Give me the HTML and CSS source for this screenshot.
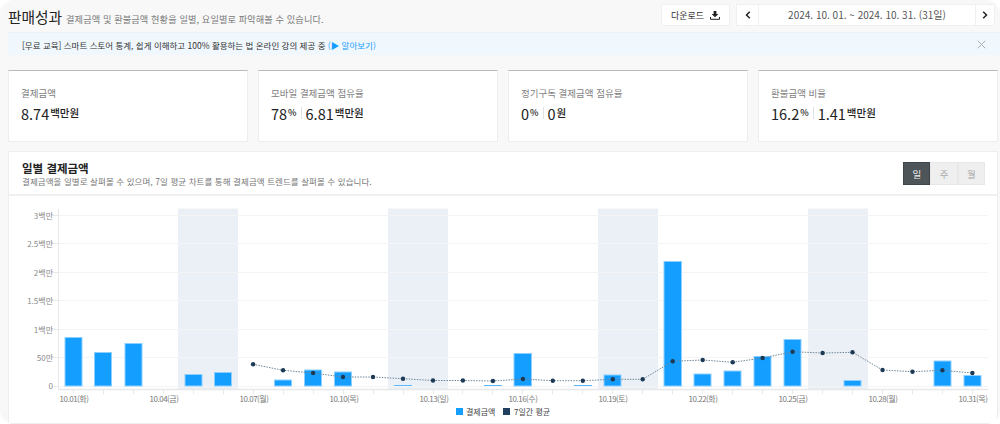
FILE: index.html
```html
<!DOCTYPE html>
<html lang="ko">
<head>
<meta charset="utf-8">
<title>판매성과</title>
<link rel="stylesheet" href="styles.css">
</head>
<body>
<main class="frame">
  <header class="top">
    <div class="heading">
      <h1 class="title">판매성과</h1>
      <p class="subtitle">결제금액 및 환불금액 현황을 일별, 요일별로 파악해볼 수 있습니다.</p>
    </div>
    <div class="actions">
      <button class="btn download">다운로드
        <svg class="dl-icon" viewBox="0 0 10 9" width="10" height="9"><path d="M3.6 0h2.8v3h2L5 6.2 1.6 3h2z" fill="#222"/><path d="M.5 6v2.3h9V6" fill="none" stroke="#222" stroke-width="1"/></svg>
      </button>
      <div class="datenav">
        <button class="btn nav prev"><svg viewBox="0 0 6 8" width="6" height="8"><path d="M4.8 .8 1.5 4l3.3 3.2" fill="none" stroke="#222" stroke-width="1.5"/></svg></button>
        <span class="daterange">2024. 10. 01. ~ 2024. 10. 31. (31일)</span>
        <button class="btn nav next"><svg viewBox="0 0 6 8" width="6" height="8"><path d="M1.2 .8 4.5 4 1.2 7.2" fill="none" stroke="#222" stroke-width="1.5"/></svg></button>
      </div>
    </div>
  </header>

  <aside class="banner">
    <p class="banner-text">[무료 교육] 스마트 스토어 통계, 쉽게 이해하고 100% 활용하는 법 온라인 강의 제공 중 <a class="banner-link">(▶ 알아보기)</a></p>
    <svg class="close" viewBox="0 0 9 9" width="9" height="9"><path d="M.7.7l7.6 7.6M8.3.7 .7 8.3" stroke="#a9b0b5" stroke-width="1" fill="none"/></svg>
  </aside>

  <section class="stats">
    <article class="stat">
      <h2 class="stat-label">결제금액</h2>
      <div class="stat-value"><span class="num">8.74</span><span class="unit">백만원</span></div>
    </article>
    <article class="stat">
      <h2 class="stat-label">모바일 결제금액 점유율</h2>
      <div class="stat-value"><span class="num">78</span><span class="pct">%</span><i class="sep"></i><span class="num">6.81</span><span class="unit">백만원</span></div>
    </article>
    <article class="stat">
      <h2 class="stat-label">정기구독 결제금액 점유율</h2>
      <div class="stat-value"><span class="num">0</span><span class="pct">%</span><i class="sep"></i><span class="num">0</span><span class="unit">원</span></div>
    </article>
    <article class="stat">
      <h2 class="stat-label">환불금액 비율</h2>
      <div class="stat-value"><span class="num">16.2</span><span class="pct">%</span><i class="sep"></i><span class="num">1.41</span><span class="unit">백만원</span></div>
    </article>
  </section>

  <section class="panel">
    <header class="panel-head">
      <div>
        <h2 class="panel-title">일별 결제금액</h2>
        <p class="panel-sub">결제금액을 일별로 살펴볼 수 있으며, 7일 평균 차트를 통해 결제금액 트렌드를 살펴볼 수 있습니다.</p>
      </div>
      <div class="toggle">
        <button class="tg on">일</button><button class="tg">주</button><button class="tg">월</button>
      </div>
    </header>
    <svg class="chart" viewBox="9 196 989 228" width="989" height="228">
      <g class="bands">
        <rect x="178" y="208.5" width="60" height="181"/>
        <rect x="388" y="208.5" width="60" height="181"/>
        <rect x="598" y="208.5" width="60" height="181"/>
        <rect x="808" y="208.5" width="60" height="181"/>
      </g>
      <g class="grid">
        <path d="M58 215.5H988M58 243.5H988M58 272.5H988M58 300.5H988M58 329.5H988M58 357.5H988M58 386.5H988"/>
      </g>
      <g class="axis">
        <path d="M58.5 209V390M52 215.5H58M52 243.5H58M52 272.5H58M52 300.5H58M52 329.5H58M52 357.5H58M52 386.5H58"/>
        <path class="xline" d="M58 389.5H988"/>
        <path d="M73.5 390v4M103.5 390v4M133.5 390v4M163.5 390v4M193.5 390v4M223.5 390v4M253.5 390v4M283.5 390v4M313.5 390v4M343.5 390v4M373.5 390v4M403.5 390v4M433.5 390v4M462.5 390v4M492.5 390v4M522.5 390v4M552.5 390v4M582.5 390v4M612.5 390v4M642.5 390v4M672.5 390v4M702.5 390v4M732.5 390v4M762.5 390v4M792.5 390v4M822.5 390v4M852.5 390v4M882.5 390v4M912.5 390v4M942.5 390v4M972.5 390v4"/>
      </g>
      <g class="ylabels">
        <text x="53" y="218.5">3백만</text>
        <text x="53" y="246.5">2.5백만</text>
        <text x="53" y="275.5">2백만</text>
        <text x="53" y="303.5">1.5백만</text>
        <text x="53" y="332.5">1백만</text>
        <text x="53" y="360.5">50만</text>
        <text x="53" y="389">0</text>
      </g>
      <g class="xlabels">
        <text x="74" y="401.5">10.01(화)</text>
        <text x="164" y="401.5">10.04(금)</text>
        <text x="254" y="401.5">10.07(월)</text>
        <text x="344" y="401.5">10.10(목)</text>
        <text x="434" y="401.5">10.13(일)</text>
        <text x="523" y="401.5">10.16(수)</text>
        <text x="613" y="401.5">10.19(토)</text>
        <text x="703" y="401.5">10.22(화)</text>
        <text x="793" y="401.5">10.25(금)</text>
        <text x="883" y="401.5">10.28(월)</text>
        <text x="973" y="401.5">10.31(목)</text>
      </g>
      <g class="bars">
        <rect x="65" y="337.5" width="17" height="48.5"/>
        <rect x="94.5" y="352.5" width="17" height="33.5"/>
        <rect x="125" y="343.5" width="17" height="42.5"/>
        <rect x="185" y="374.5" width="17" height="11.5"/>
        <rect x="214.5" y="372.5" width="17" height="13.5"/>
        <rect x="274.5" y="380" width="17" height="6"/>
        <rect x="304.5" y="370" width="17" height="16"/>
        <rect x="334.5" y="372" width="17" height="14"/>
        <rect class="thin" x="394" y="385" width="18" height="1"/>
        <rect class="thin" x="484" y="385" width="18" height="1"/>
        <rect x="514" y="353.5" width="17.5" height="32.5"/>
        <rect class="thin" x="574" y="385" width="18" height="1"/>
        <rect x="604" y="375" width="17" height="11"/>
        <rect x="664" y="261.5" width="17.5" height="124.5"/>
        <rect x="694" y="374" width="17" height="12"/>
        <rect x="724" y="371" width="17" height="15"/>
        <rect x="754" y="356.5" width="17" height="29.5"/>
        <rect x="784" y="339.5" width="17" height="46.5"/>
        <rect x="844" y="380.5" width="17" height="5.5"/>
        <rect x="934" y="361" width="17" height="25"/>
        <rect x="964" y="375.5" width="17" height="10.5"/>
      </g>
      <polyline class="avg" points="253.1,364.3 283.1,370.3 313.1,373 343,377 373,377 403,378.7 433,380.5 462.9,380.5 492.9,381 522.9,379 552.8,380.7 582.8,380.7 612.8,379.3 642.7,379.3 672.7,361.3 702.7,360 732.7,362.3 762.6,358 792.6,351.7 822.6,353 852.5,352.3 882.5,370 912.5,371.7 942.4,370.3 972.4,373"/>
      <g class="dots">
        <circle cx="253.1" cy="364.3" r="2.2"/><circle cx="283.1" cy="370.3" r="2.2"/><circle cx="313.1" cy="373" r="2.2"/><circle cx="343" cy="377" r="2.2"/><circle cx="373" cy="377" r="2.2"/><circle cx="403" cy="378.7" r="2.2"/><circle cx="433" cy="380.5" r="2.2"/><circle cx="462.9" cy="380.5" r="2.2"/><circle cx="492.9" cy="381" r="2.2"/><circle cx="522.9" cy="379" r="2.2"/><circle cx="552.8" cy="380.7" r="2.2"/><circle cx="582.8" cy="380.7" r="2.2"/><circle cx="612.8" cy="379.3" r="2.2"/><circle cx="642.7" cy="379.3" r="2.2"/><circle cx="672.7" cy="361.3" r="2.2"/><circle cx="702.7" cy="360" r="2.2"/><circle cx="732.7" cy="362.3" r="2.2"/><circle cx="762.6" cy="358" r="2.2"/><circle cx="792.6" cy="351.7" r="2.2"/><circle cx="822.6" cy="353" r="2.2"/><circle cx="852.5" cy="352.3" r="2.2"/><circle cx="882.5" cy="370" r="2.2"/><circle cx="912.5" cy="371.7" r="2.2"/><circle cx="942.4" cy="370.3" r="2.2"/><circle cx="972.4" cy="373" r="2.2"/>
      </g>
      <g class="legend">
        <rect class="lg-a" x="456" y="408" width="7" height="7"/>
        <text x="466" y="415">결제금액</text>
        <rect class="lg-b" x="503" y="408" width="7" height="7"/>
        <text x="514" y="415">7일간 평균</text>
      </g>
    </svg>
  </section>
</main>
</body>
</html>
```
FILE: styles.css
```css
* { box-sizing: border-box; }
html, body { margin: 0; padding: 0; background: #fff; }
body { font-family: "Noto Sans CJK KR", "Noto Sans", sans-serif; color: #222; }
h1, h2, p { margin: 0; font-weight: 400; }
button { font: inherit; padding: 0; cursor: pointer; }

.frame {
  width: 1000px;
  height: 424px;
  overflow: hidden;
  background: #f8f8f8;
  border-radius: 14px;
  padding-left: 8px;
}

.top {
  display: flex;
  justify-content: space-between;
  align-items: flex-start;
  height: 33px;
  padding: 4px 5px 0 0;
  border-bottom: 1px solid #f0f3f6;
}
.heading { display: flex; align-items: baseline; gap: 4px; }
.title { font-size: 14.7px; line-height: 26px; color: #222; }
.subtitle { font-size: 9.2px; color: #7a7a7a; letter-spacing: .1px; }
.actions { display: flex; gap: 6px; }
.btn {
  background: #fff;
  border: 1px solid #f0f0f0;
  height: 22px;
  color: #333;
}
.download {
  width: 69px;
  font-size: 9px;
  display: flex;
  align-items: center;
  justify-content: center;
  gap: 6px;
}
.datenav { display: flex; width: 259px; height: 22px; background: #fff; }
.nav { width: 23px; display: flex; align-items: center; justify-content: center; flex: none; }
.next { width: 20px; }
.daterange {
  flex: 1;
  font-size: 10px;
  line-height: 20px;
  text-align: center;
  color: #555;
  border-top: 1px solid #f0f0f0;
  border-bottom: 1px solid #f0f0f0;
}

.banner {
  display: flex;
  align-items: center;
  justify-content: space-between;
  height: 22px;
  padding: 1px 14px 0 14px;
  background: #f0f7fd;
}
.banner-text { font-size: 8.5px; color: #333; }
.banner-link { color: #149eff; }
.close { flex: none; }

.stats {
  display: grid;
  grid-template-columns: repeat(4, 240px);
  gap: 10px;
  margin-top: 15px;
}
.stat {
  height: 72px;
  background: #fff;
  border: 1px solid #eeeeee;
  border-top: 1px solid #b8bbbb;
  padding: 15px 12px 0;
}
.stat-label { font-size: 9.5px; line-height: 14px; color: #7f7f7f; }
.stat-value { display: flex; align-items: center; margin-top: 3px; height: 20px; }
.num { font-size: 14.5px; color: #222; }
.unit { font-size: 10.5px; font-weight: 500; margin-left: 1px; color: #222; position: relative; top: -1px; }
.pct { font-size: 9px; font-weight: 500; margin-left: 1px; color: #222; position: relative; top: -1px; }
.sep { width: 1px; height: 12px; background: #e2e2e2; margin: 0 4px; }

.panel {
  width: 990px;
  height: 273px;
  margin-top: 9px;
  background: #fff;
  border: 1px solid #eeeeee;
}
.panel-head {
  display: flex;
  justify-content: space-between;
  align-items: flex-start;
  height: 44px;
  padding: 9px 12px 0 13px;
  border-bottom: 2px solid #f0f0f0;
}
.panel-title { font-size: 11.5px; line-height: 14px; font-weight: 700; color: #222; }
.panel-sub { font-size: 8.5px; line-height: 13px; color: #777; letter-spacing: .08px; }
.toggle { display: flex; margin-top: 1px; }
.tg {
  width: 27.3px;
  height: 23px;
  font-size: 9.5px;
  background: #efefef;
  border: 1px solid #e8e8e8;
  color: #aaa;
}
.tg.on { background: #4d5558; border-color: #3f4649; color: #eee; }

.chart { display: block; }
.bands rect { fill: #ebf0f6; }
.grid path { stroke: #f4f4f4; stroke-width: 1; fill: none; }
.axis path { stroke: #e6e8ea; stroke-width: 1; fill: none; }
.axis .xline { stroke-width: 1.6; }
.ylabels text { font-size: 8px; fill: #8a8a8a; text-anchor: end; }
.xlabels text { font-size: 8px; fill: #777; text-anchor: middle; letter-spacing: -.5px; }
.bars rect { fill: #149eff; stroke: #8dd0ff; stroke-width: 1; }
.bars .thin { fill: #5cb8ff; stroke: none; }
.avg { fill: none; stroke: #6f8797; stroke-width: 1; stroke-dasharray: 1.5 1.2; }
.dots circle { fill: #1c3a55; }
.legend text { font-size: 8px; fill: #444; }
.lg-a { fill: #149eff; }
.lg-b { fill: #21405f; }
```
